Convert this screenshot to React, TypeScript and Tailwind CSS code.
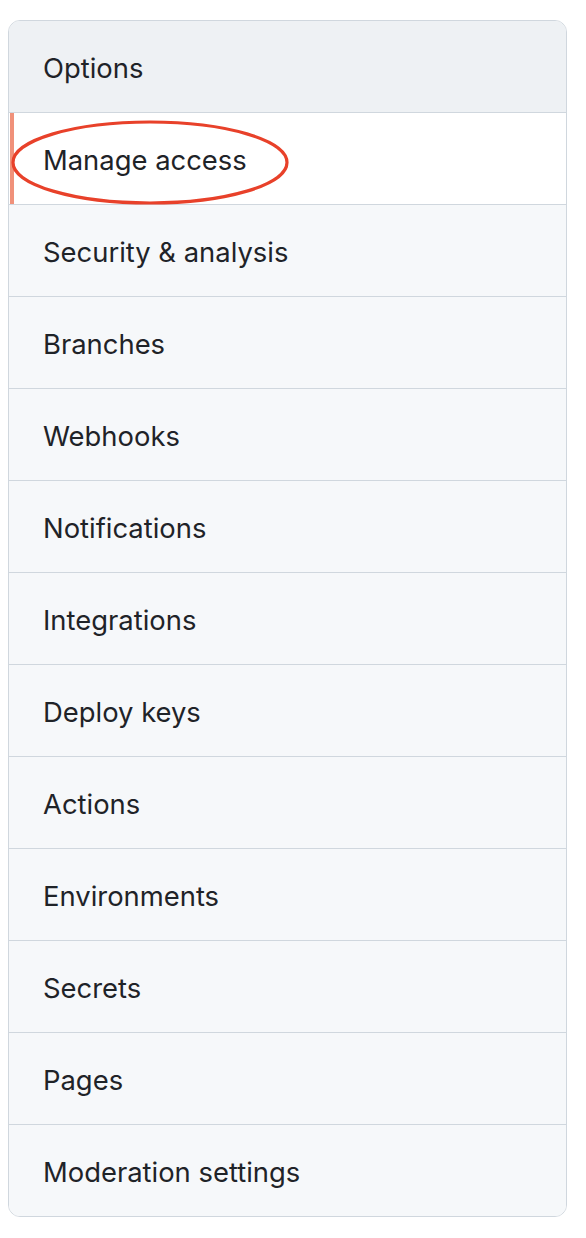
const items = [
  "Manage access",
  "Security & analysis",
  "Branches",
  "Webhooks",
  "Notifications",
  "Integrations",
  "Deploy keys",
  "Actions",
  "Environments",
  "Secrets",
  "Pages",
  "Moderation settings",
];

export default function App() {
  return (
    <div className="min-h-[1238px] w-[586px] bg-white pt-[20px] pl-[8px] font-['Inter','Liberation_Sans',Arial,sans-serif] text-[#1f2328]">
      <nav className="relative w-[559px] overflow-hidden rounded-[12px] border border-[#d0d7de]">
        <div className="flex h-[92px] items-center border-b border-[#d0d7de] bg-[#eef1f4] pl-[34px] pt-[4px] text-[27.4px]">
          Options
        </div>
        {items.map((label, i) => {
          const active = i === 0;
          return (
            <div
              key={label}
              className={
                active
                  ? "relative flex h-[92px] items-center border-b border-[#d0d7de] bg-white pl-[34px] pt-[4px] text-[27.4px]"
                  : i === items.length - 1
                  ? "flex h-[91px] items-center bg-[#f6f8fa] pl-[34px] pt-[4px] text-[27.4px]"
                  : "flex h-[92px] items-center border-b border-[#d0d7de] bg-[#f6f8fa] pl-[34px] pt-[4px] text-[27.4px]"
              }
            >
              {active && <span className="absolute left-[1px] top-0 h-full w-[4px] bg-[#f0917a]" />}
              {label}
            </div>
          );
        })}
        {/* annotation ellipse around the active item */}
        <svg
          className="pointer-events-none absolute left-0 top-0"
          width="300"
          height="200"
          viewBox="0 0 300 200"
        >
          <ellipse cx="141" cy="141.5" rx="137" ry="40.5" fill="none" stroke="#e8412a" strokeWidth="3.2" />
        </svg>
      </nav>
    </div>
  );
}
